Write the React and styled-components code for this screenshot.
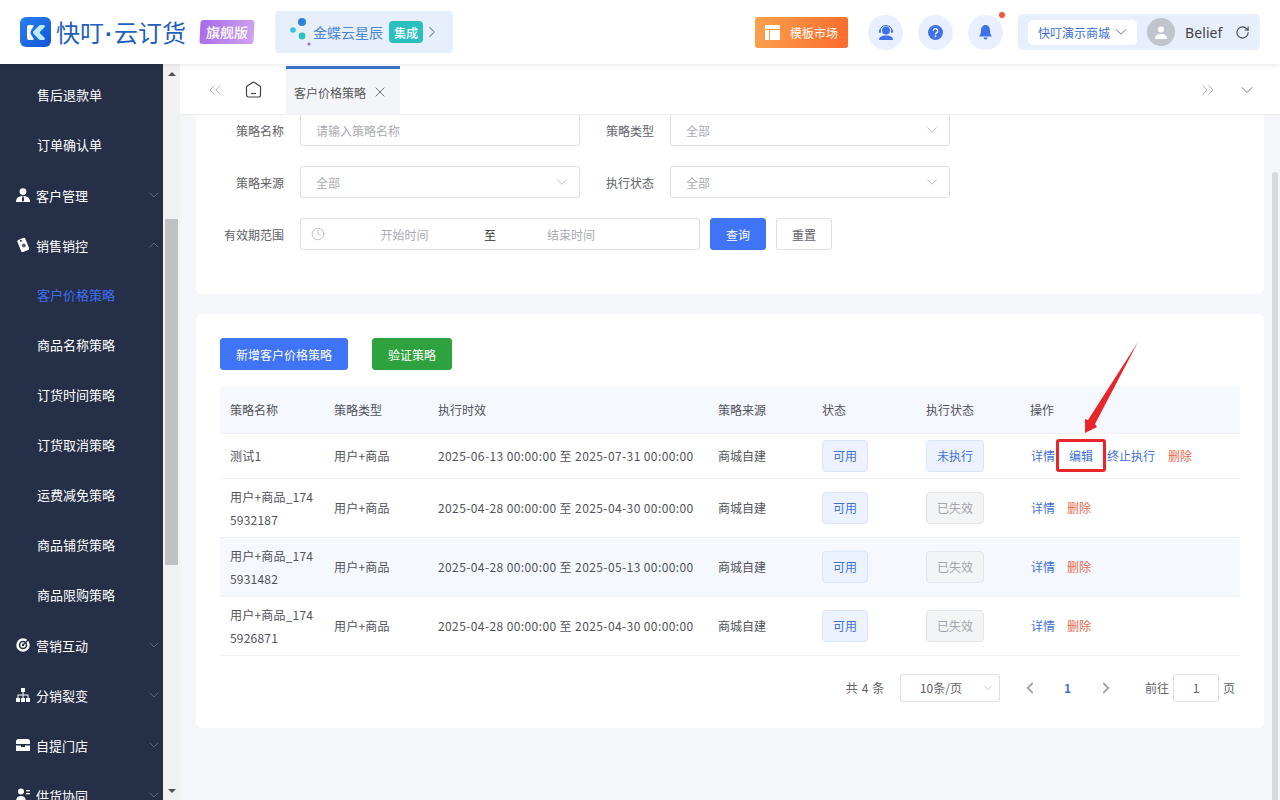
import React from "react";
import styled, { createGlobalStyle } from "styled-components";
import { ChevronDown, ChevronUp, ChevronLeft, ChevronRight, ChevronsLeft, ChevronsRight, X, Clock, RotateCw } from "lucide-react";

const GlobalStyle = createGlobalStyle`
  html, body { margin: 0; height: 100%; overflow: hidden; }
  body {
    font-family: "Noto Sans CJK SC", "Liberation Sans", sans-serif;
    font-size: 12px;
    color: #606266;
  }
  * { box-sizing: border-box; }
`;

const Page = styled.div`
  width: 1280px;
  height: 800px;
  display: flex;
  flex-direction: column;
  background: #f5f6f9;
  overflow: hidden;
`;

/* header */
const Header = styled.header`
  height: 64px;
  flex: none;
  display: flex;
  align-items: center;
  background: #fff;
  box-shadow: 0 1px 4px rgba(0, 0, 0, 0.1);
  padding: 0 20px;
  position: relative;
  z-index: 2;
`;
const LogoMark = styled.div`
  width: 31px;
  height: 30px;
  border-radius: 6px;
  background: linear-gradient(135deg, #2a80f2, #1254d6);
  display: flex;
  align-items: center;
  justify-content: center;
`;
const LogoText = styled.span`
  margin-left: 5px;
  font-size: 24px;
  line-height: 31px;
  color: #1f5fbe;
  white-space: nowrap;
`;
const LogoDot = styled.span`
  font-family: "Liberation Sans", sans-serif;
  font-weight: 700;
  margin: 0 1px;
`;
const Edition = styled.span`
  margin-left: 14px;
  width: 54px;
  height: 24px;
  border-radius: 3px;
  background: linear-gradient(100deg, #a86ae8, #cfa2f2);
  color: #fff;
  font-size: 14px;
  font-weight: 500;
  display: flex;
  align-items: center;
  justify-content: center;
  transform: skewX(-3deg);
`;
const Promo = styled.div`
  margin-left: 21px;
  width: 178px;
  height: 42px;
  border-radius: 4px;
  background: #e8effc;
  display: flex;
  align-items: center;
  padding-left: 15px;
`;
const PromoText = styled.span`
  margin-left: 1px;
  font-size: 14px;
  color: #4a86d6;
  white-space: nowrap;
`;
const PromoTag = styled.span`
  margin-left: 6px;
  width: 34px;
  height: 22px;
  border-radius: 4px;
  background: #2bbfc0;
  color: #fff;
  font-size: 12px;
  font-weight: 500;
  display: flex;
  align-items: center;
  justify-content: center;
`;
const PromoArrow = styled(ChevronRight)`
  color: #8a97ad;
`;
const HeaderRight = styled.div`
  margin-left: auto;
  display: flex;
  align-items: center;
`;
const MarketButton = styled.div`
  width: 93px;
  height: 31px;
  border-radius: 3px;
  background: linear-gradient(100deg, #fca24c, #fb6b2c);
  color: #fff;
  font-size: 12px;
  display: flex;
  align-items: center;
  padding-left: 10px;
  gap: 10px;
`;
const RoundIcon = styled.div`
  width: 35px;
  height: 35px;
  margin-left: ${(p) => p.$gap}px;
  border-radius: 50%;
  background: #e9effc;
  display: flex;
  align-items: center;
  justify-content: center;
  position: relative;
`;
const Dot = styled.span`
  position: absolute;
  top: -3px;
  right: -2px;
  width: 6px;
  height: 6px;
  border-radius: 50%;
  background: #f4573a;
`;
const UserBox = styled.div`
  margin-left: 15px;
  width: 242px;
  height: 36px;
  border-radius: 5px;
  background: #e8effc;
  display: flex;
  align-items: center;
  padding-left: 10px;
`;
const ShopSelect = styled.div`
  width: 109px;
  height: 25px;
  border-radius: 5px;
  background: #fff;
  color: #3d6fd0;
  font-size: 12px;
  display: flex;
  align-items: center;
  padding-left: 10px;
  gap: 2px;
`;
const Avatar = styled.div`
  margin-left: 10px;
  width: 28px;
  height: 28px;
  border-radius: 50%;
  background: #c0c4cc;
  display: flex;
  align-items: center;
  justify-content: center;
`;
const UserName = styled.span`
  margin-left: 10px;
  font-family: "Noto Sans", sans-serif;
  font-size: 14px;
  letter-spacing: 0.1px;
  color: #444;
`;
const RefreshIcon = styled(RotateCw)`
  margin-left: 12px;
  color: #444;
`;

/* sidebar */
const Body = styled.div`
  flex: 1;
  min-height: 0;
  display: flex;
`;
const Sidebar = styled.nav`
  width: 163px;
  flex: none;
  background: #252f48;
  padding-top: 5px;
  overflow: hidden;
`;
const NavRow = styled.div`
  height: 50px;
  flex: none;
  display: flex;
  align-items: center;
  padding-left: ${(p) => (p.$sub ? 37 : 16)}px;
  padding-right: 1px;
  padding-top: ${(p) => (p.$sub ? 0 : 2)}px;
  gap: 6px;
  font-size: 13px;
  color: ${(p) => (p.$active ? "#3e6ff5" : "#fff")};
`;
const NavLabel = styled.span`
  flex: 1;
`;
const NavChevron = styled.span`
  color: #5d6579;
  display: flex;
`;
const SideScroll = styled.div`
  width: 17px;
  flex: none;
  background: #f1f1f1;
  display: flex;
  flex-direction: column;
  align-items: center;
`;
const ScrollArrow = styled.div`
  width: 0;
  height: 0;
  margin-top: ${(p) => (p.$down ? "auto" : "8px")};
  margin-bottom: ${(p) => (p.$down ? "7px" : "0")};
  border-left: 4px solid transparent;
  border-right: 4px solid transparent;
  border-bottom: ${(p) => (p.$down ? "none" : "4px solid #505050")};
  border-top: ${(p) => (p.$down ? "4px solid #505050" : "none")};
`;
const ScrollThumb = styled.div`
  width: 13px;
  height: 346px;
  margin-top: 143px;
  background: #c1c1c1;
`;

/* main */
const Main = styled.main`
  flex: 1;
  min-width: 0;
  display: flex;
  flex-direction: column;
  position: relative;
`;
const TabBar = styled.div`
  height: 51px;
  flex: none;
  background: #fff;
  display: flex;
  align-items: flex-end;
  padding-left: 25px;
  border-bottom: 1px solid #eceef2;
  color: #a0a3a9;
`;
const TabTool = styled.div`
  height: 49px;
  display: flex;
  align-items: center;
  margin-right: ${(p) => p.$gap || 0}px;
  margin-left: ${(p) => p.$left || 0}px;
`;
const Tab = styled.div`
  width: 114px;
  height: 49px;
  margin-left: 24px;
  background: #f4f5f8;
  border-top: 3px solid #3b74c9;
  display: flex;
  align-items: center;
  padding-left: 8px;
  gap: 6px;
  font-size: 12px;
  color: #555;
  margin-bottom: -1px;
`;
const Content = styled.div`
  flex: 1;
  min-height: 0;
  padding: 0 16px;
  position: relative;
  overflow: hidden;
`;
const Card = styled.section`
  background: #fff;
  border-radius: 6px;
  margin-bottom: 20px;
`;
const FilterCard = styled(Card)`
  height: 180px;
  margin-top: -1px;
  padding-right: 20px;
  border-radius: 0 0 6px 6px;
  display: flex;
  flex-direction: column;
  gap: 20px;
`;
const FormRow = styled.div`
  display: flex;
  height: 32px;
  align-items: center;
`;
const FieldLabel = styled.label`
  width: ${(p) => p.$w || 104}px;
  padding-right: 16px;
  text-align: right;
  font-size: 12px;
  color: #606266;
  white-space: nowrap;
`;
const Field = styled.div`
  width: 280px;
  height: 32px;
  background: #fff;
  border: 1px solid #dcdfe6;
  border-radius: 3px;
  display: flex;
  align-items: center;
  padding: 0 8px 0 15px;
  color: #a9acb3;
  font-size: 12px;
`;
const FieldText = styled.span`
  flex: 1;
`;
const DateField = styled(Field)`
  width: 400px;
  padding: 0 10px;
`;
const DateText = styled.span`
  width: ${(p) => p.$w}px;
  text-align: center;
`;
const DateSep = styled.span`
  color: #303133;
`;
const Button = styled.button`
  height: 32px;
  width: ${(p) => p.$w || 56}px;
  margin-left: ${(p) => p.$left || 0}px;
  border-radius: 3px;
  border: 1px solid ${(p) => (p.$bg ? p.$bg : "#dcdfe6")};
  background: ${(p) => p.$bg || "#fff"};
  color: ${(p) => (p.$bg ? "#fff" : "#606266")};
  font: inherit;
  font-size: 12px;
  padding: 0;
`;
const ListCard = styled(Card)`
  height: 414px;
  padding: 24px 24px 0;
`;
const Table = styled.table`
  width: 1020px;
  margin-top: 16px;
  border-collapse: collapse;
  table-layout: fixed;
  font-size: 12px;
  color: #50535a;
`;
const Th = styled.th`
  height: 47px;
  padding: 0 10px;
  background: #f5f8fe;
  font-weight: 400;
  text-align: left;
  color: #50535a;
  border-bottom: 1px solid #eef0f4;
`;
const Tr = styled.tr`
  background: ${(p) => (p.$striped ? "#f5f8fe" : "#fff")};
`;
const Td = styled.td`
  height: ${(p) => p.$h}px;
  padding: 0 10px;
  line-height: 23px;
  border-bottom: 1px solid #eef0f4;
  word-break: break-all;
  letter-spacing: ${(p) => p.$spacing || 0}px;
  white-space: ${(p) => (p.$nowrap ? "nowrap" : "normal")};
`;
const Chip = styled.span`
  display: inline-flex;
  align-items: center;
  justify-content: center;
  height: 32px;
  padding: 0 10px;
  border-radius: 4px;
  border: 1px solid ${(p) => (p.$off ? "#e4e5e8" : "#d9e5fb")};
  background: ${(p) => (p.$off ? "#f3f4f5" : "#ecf2fe")};
  color: ${(p) => (p.$off ? "#a2a5ab" : "#3f72d8")};
  vertical-align: middle;
`;
const Action = styled.a`
  color: ${(p) => (p.$danger ? "#e8694a" : "#3f72d8")};
  margin-left: ${(p) => p.$left || 0}px;
`;
const Pager = styled.div`
  height: 32px;
  margin-top: 16px;
  display: flex;
  align-items: center;
  justify-content: flex-end;
  padding-right: 5px;
`;
const PagerText = styled.span`
  margin-left: ${(p) => p.$left || 0}px;
  letter-spacing: ${(p) => p.$spacing || 0}px;
  color: #606266;
`;
const PageSize = styled(Field)`
  width: 100px;
  height: 28px;
  margin-left: 15px;
  padding: 0 4px 0 19px;
  color: #606266;
`;
const PageArrow = styled.span`
  display: flex;
  margin-left: ${(p) => p.$left}px;
  color: #8f9299;
`;
const PageNum = styled.span`
  margin-left: 25px;
  font-weight: 700;
  color: #3f72d8;
`;
const PageInput = styled(Field)`
  width: 46px;
  height: 28px;
  margin: 0 4px;
  padding: 0;
  justify-content: center;
  color: #606266;
`;
const MainThumb = styled.div`
  position: absolute;
  top: 108px;
  bottom: 0;
  right: 2px;
  width: 6px;
  border-radius: 3px 3px 0 0;
  background: #d9d9db;
`;

/* annotation drawn on top of the screenshot */
const Highlight = styled.div`
  position: absolute;
  left: 876px;
  top: 324px;
  width: 50px;
  height: 33px;
  border: 3px solid #e8262a;
  border-radius: 3px;
`;
const ArrowMark = styled.svg`
  position: absolute;
  left: 900px;
  top: 225px;
`;

const PersonIcon = () => (
  <svg width="14" height="14" viewBox="0 0 14 14" fill="#fff">
    <circle cx="7" cy="3.6" r="3.4" />
    <path d="M0 14c0-4 2.500-6 7-6s7 2 7 6z" />
    <path d="M6.300 8.500h1.400l.5 4-1.200 1.200-1.200-1.200z" fill="#252f48" />
  </svg>
);
const TagIcon = () => (
  <svg width="14" height="16" viewBox="0 0 14 16" fill="#fff">
    <rect x="3" y="1.500" width="8.500" height="13" rx="1.500" transform="rotate(-22 7 8)" />
    <circle cx="4.800" cy="3.800" r="1" fill="#252f48" />
    <circle cx="7.800" cy="8.600" r="2" fill="#5a5f78" />
  </svg>
);
const TargetIcon = () => (
  <svg width="14" height="14" viewBox="0 0 14 14" fill="none" stroke="#fff">
    <circle cx="7" cy="7" r="5.500" strokeWidth="2.500" />
    <circle cx="7" cy="7" r="2" strokeWidth="1.500" />
    <path d="M7 7l5-5" strokeWidth="1.200" stroke="#252f48" />
  </svg>
);
const TreeIcon = () => (
  <svg width="14" height="14" viewBox="0 0 14 14" fill="#fff">
    <rect x="5" y="0" width="4" height="4" />
    <rect x="0" y="10" width="4" height="4" />
    <rect x="5" y="10" width="4" height="4" />
    <rect x="10" y="10" width="4" height="4" />
    <path d="M6.500 4h1v2.500H12.500V10h-1V7.500h-4V10h-1V7.500h-4V10h-1V6.500h5z" />
  </svg>
);
const StoreIcon = () => (
  <svg width="14" height="14" viewBox="0 0 14 14" fill="#fff">
    <path d="M2.500 1h9A2.500 2.500 0 0 1 14 3.500V6H0V3.500A2.500 2.500 0 0 1 2.500 1z" />
    <path d="M0 7.500h5V9h4V7.500h5V13H0z" />
  </svg>
);
const SupplyIcon = () => (
  <svg width="14" height="14" viewBox="0 0 14 14" fill="#fff">
    <circle cx="5" cy="3.500" r="3" />
    <path d="M0 14c0-4 1.500-6 5-6s5 2 5 6z" />
    <rect x="10" y="2" width="4" height="1.300" />
    <rect x="10" y="5" width="4" height="1.300" />
  </svg>
);

const LogoGlyph = () => (
  <svg width="18" height="15" viewBox="0 0 18 15">
    <path d="M2 0h3.500c1 0 1.500.8 1 1.600L4 5.500c-.7 1.200-.7 2.800 0 4l2.500 3.900c.5.800 0 1.600-1 1.600H2c-1.100 0-2-.9-2-2V2C0 .9.900 0 2 0z" fill="#fff" />
    <path d="M13.500 0h3c1.200 0 1.800 1.300 1 2.200L13.300 6.400c-.6.600-.6 1.600 0 2.200l4.200 4.200c.8.900.2 2.200-1 2.200h-3c-.5 0-1-.2-1.400-.6L6.500 8.800c-.7-.7-.7-1.900 0-2.600L12.100.6c.4-.4.900-.6 1.400-.6z" fill="#b9ecff" />
  </svg>
);
const PromoDots = () => (
  <svg width="22" height="28" viewBox="0 0 22 28">
    <circle cx="12" cy="4" r="4" fill="#2f7fe0" />
    <circle cx="3" cy="12" r="2.800" fill="#35c4e0" />
    <circle cx="12" cy="18" r="3.400" fill="#2bbfc0" />
    <circle cx="19" cy="26" r="1.600" fill="#a06ae0" />
  </svg>
);
const LayoutIcon = () => (
  <svg width="15" height="15" viewBox="0 0 15 15" fill="#fff">
    <rect x="0" y="0" width="15" height="4" />
    <rect x="0" y="5" width="4" height="10" />
    <rect x="5" y="5" width="10" height="10" />
  </svg>
);
const AgentIcon = () => (
  <svg width="16" height="15" viewBox="0 0 16 15">
    <circle cx="8" cy="5.500" r="4" fill="#3f72e8" />
    <path d="M2 6a6 5.500 0 0 1 12 0" fill="none" stroke="#3f72e8" strokeWidth="1" />
    <rect x="1" y="4.500" width="2" height="3.500" rx="1" fill="#3f72e8" />
    <rect x="13" y="4.500" width="2" height="3.500" rx="1" fill="#3f72e8" />
    <path d="M1 15c0-3 2.500-4.500 7-4.500s7 1.500 7 4.500z" fill="#3f72e8" />
  </svg>
);
const HelpIcon = () => (
  <svg width="15" height="15" viewBox="0 0 15 15">
    <circle cx="7.500" cy="7.500" r="7.500" fill="#3f72e8" />
    <path d="M5.300 5.800a2.200 2.200 0 1 1 3.400 1.800c-.8.500-1.200.9-1.200 1.800" fill="none" stroke="#fff" strokeWidth="1.300" />
    <circle cx="7.500" cy="11.300" r=".9" fill="#fff" />
  </svg>
);
const BellIcon = () => (
  <svg width="13" height="15" viewBox="0 0 13 15" fill="#3f72e8">
    <path d="M6.500 0C9.500 0 11 2.500 11 5.500c0 2.500.7 4.500 2 6H0c1.300-1.500 2-3.500 2-6C2 2.500 3.500 0 6.500 0z" />
    <path d="M4.500 12.500h4a2 2 0 0 1-4 0z" />
  </svg>
);
const AvatarIcon = () => (
  <svg width="12" height="13" viewBox="0 0 12 13" fill="#fff">
    <circle cx="6" cy="3.500" r="3" />
    <path d="M0 13c0-3.500 2-5 6-5s6 1.500 6 5z" />
  </svg>
);
const HomeIcon = () => (
  <svg width="17" height="17" viewBox="0 0 17 17" fill="none" stroke="#444" strokeWidth="1.200">
    <path d="M8.500 1 15.500 5.500V14a2 2 0 0 1-2 2h-10a2 2 0 0 1-2-2V5.500z" strokeLinejoin="round" />
    <path d="M6 12.500h5" />
  </svg>
);

const navItems = [
  { label: "售后退款单", sub: true },
  { label: "订单确认单", sub: true },
  { label: "客户管理", icon: <PersonIcon /> },
  { label: "销售销控", icon: <TagIcon />, open: true },
  { label: "客户价格策略", sub: true, active: true },
  { label: "商品名称策略", sub: true },
  { label: "订货时间策略", sub: true },
  { label: "订货取消策略", sub: true },
  { label: "运费减免策略", sub: true },
  { label: "商品铺货策略", sub: true },
  { label: "商品限购策略", sub: true },
  { label: "营销互动", icon: <TargetIcon /> },
  { label: "分销裂变", icon: <TreeIcon /> },
  { label: "自提门店", icon: <StoreIcon /> },
  { label: "供货协同", icon: <SupplyIcon /> },
];

const rows = [
  { name: "测试1", time: "2025-06-13 00:00:00 至 2025-07-31 00:00:00", run: "未执行", h: 45, first: true },
  { name: "用户+商品_1745932187", time: "2025-04-28 00:00:00 至 2025-04-30 00:00:00", run: "已失效", off: true, h: 59 },
  { name: "用户+商品_1745931482", time: "2025-04-28 00:00:00 至 2025-05-13 00:00:00", run: "已失效", off: true, h: 59, striped: true },
  { name: "用户+商品_1745926871", time: "2025-04-28 00:00:00 至 2025-04-30 00:00:00", run: "已失效", off: true, h: 59 },
];

const columns = [
  ["策略名称", 104],
  ["策略类型", 104],
  ["执行时效", 280],
  ["策略来源", 104],
  ["状态", 104],
  ["执行状态", 104],
  ["操作", 220],
];

export default function App() {
  return (
    <Page>
      <GlobalStyle />
      <Header>
        <LogoMark>
          <LogoGlyph />
        </LogoMark>
        <LogoText>
          快叮<LogoDot>·</LogoDot>云订货
        </LogoText>
        <Edition>旗舰版</Edition>
        <Promo>
          <PromoDots />
          <PromoText>金蝶云星辰</PromoText>
          <PromoTag>集成</PromoTag>
          <PromoArrow size={18} strokeWidth={1.500} />
        </Promo>
        <HeaderRight>
          <MarketButton>
            <LayoutIcon />
            模板市场
          </MarketButton>
          <RoundIcon $gap={20}>
            <AgentIcon />
          </RoundIcon>
          <RoundIcon $gap={15}>
            <HelpIcon />
          </RoundIcon>
          <RoundIcon $gap={15}>
            <BellIcon />
            <Dot />
          </RoundIcon>
          <UserBox>
            <ShopSelect>
              快叮演示商城
              <ChevronDown size={18} strokeWidth={1.200} color="#666" />
            </ShopSelect>
            <Avatar>
              <AvatarIcon />
            </Avatar>
            <UserName>Belief</UserName>
            <RefreshIcon size={15} strokeWidth={1.700} />
          </UserBox>
        </HeaderRight>
      </Header>
      <Body>
        <Sidebar>
          {navItems.map((item) => (
            <NavRow key={item.label} $sub={item.sub} $active={item.active}>
              {item.icon}
              <NavLabel>{item.label}</NavLabel>
              {!item.sub && (
                <NavChevron>
                  {item.open ? <ChevronUp size={16} strokeWidth={1.500} /> : <ChevronDown size={16} strokeWidth={1.500} />}
                </NavChevron>
              )}
            </NavRow>
          ))}
        </Sidebar>
        <SideScroll>
          <ScrollArrow />
          <ScrollThumb />
          <ScrollArrow $down />
        </SideScroll>
        <Main>
          <TabBar>
            <TabTool $gap={20}>
              <ChevronsLeft size={20} strokeWidth={1} />
            </TabTool>
            <TabTool>
              <HomeIcon />
            </TabTool>
            <Tab>
              客户价格策略
              <X size={16} strokeWidth={1.400} color="#666" />
            </Tab>
            <TabTool $left={798}>
              <ChevronsRight size={20} strokeWidth={1} />
            </TabTool>
            <TabTool $left={19}>
              <ChevronDown size={20} strokeWidth={1} color="#666" />
            </TabTool>
          </TabBar>
          <Content>
            <FilterCard>
              <FormRow>
                <FieldLabel>策略名称</FieldLabel>
                <Field>
                  <FieldText>请输入策略名称</FieldText>
                </Field>
                <FieldLabel $w={90}>策略类型</FieldLabel>
                <Field>
                  <FieldText>全部</FieldText>
                  <ChevronDown size={18} strokeWidth={1.100} />
                </Field>
              </FormRow>
              <FormRow>
                <FieldLabel>策略来源</FieldLabel>
                <Field>
                  <FieldText>全部</FieldText>
                  <ChevronDown size={18} strokeWidth={1.100} />
                </Field>
                <FieldLabel $w={90}>执行状态</FieldLabel>
                <Field>
                  <FieldText>全部</FieldText>
                  <ChevronDown size={18} strokeWidth={1.100} />
                </Field>
              </FormRow>
              <FormRow>
                <FieldLabel>有效期范围</FieldLabel>
                <DateField>
                  <Clock size={14} strokeWidth={1.200} />
                  <DateText $w={159}>开始时间</DateText>
                  <DateSep>至</DateSep>
                  <DateText $w={150}>结束时间</DateText>
                </DateField>
                <Button $bg="#3f74f6" $left={10}>查询</Button>
                <Button $left={10}>重置</Button>
              </FormRow>
            </FilterCard>
            <ListCard>
              <div>
                <Button $bg="#3f74f6" $w={128}>新增客户价格策略</Button>
                <Button $bg="#2ea23e" $w={80} $left={24}>验证策略</Button>
              </div>
              <Table>
                <colgroup>
                  {columns.map(([title, w]) => (
                    <col key={title} style={{ width: w }} />
                  ))}
                </colgroup>
                <thead>
                  <tr>
                    {columns.map(([title]) => (
                      <Th key={title}>{title}</Th>
                    ))}
                  </tr>
                </thead>
                <tbody>
                  {rows.map((row) => (
                    <Tr key={row.name} $striped={row.striped}>
                      <Td $h={row.h} $spacing={0.2}>{row.name}</Td>
                      <Td $h={row.h} $spacing={0.2}>用户+商品</Td>
                      <Td $h={row.h} $nowrap $spacing={0.4}>{row.time}</Td>
                      <Td $h={row.h}>商城自建</Td>
                      <Td $h={row.h}>
                        <Chip>可用</Chip>
                      </Td>
                      <Td $h={row.h}>
                        <Chip $off={row.off}>{row.run}</Chip>
                      </Td>
                      <Td $h={row.h} $nowrap>
                        <Action $left={1}>详情</Action>
                        {row.first ? (
                          <>
                            <Action $left={14}>编辑</Action>
                            <Action $left={14}>终止执行</Action>
                            <Action $danger $left={13}>删除</Action>
                          </>
                        ) : (
                          <Action $danger $left={12}>删除</Action>
                        )}
                      </Td>
                    </Tr>
                  ))}
                </tbody>
              </Table>
              <Pager>
                <PagerText $spacing={0.6}>共 4 条</PagerText>
                <PageSize>
                  <FieldText>10条/页</FieldText>
                  <ChevronDown size={14} strokeWidth={1.200} color="#b5b8bf" />
                </PageSize>
                <PageArrow $left={21}>
                  <ChevronLeft size={18} strokeWidth={2.200} />
                </PageArrow>
                <PageNum>1</PageNum>
                <PageArrow $left={26}>
                  <ChevronRight size={18} strokeWidth={2.200} />
                </PageArrow>
                <PagerText $left={30}>前往</PagerText>
                <PageInput>1</PageInput>
                <PagerText>页</PagerText>
              </Pager>
            </ListCard>
            <Highlight />
            <ArrowMark width="60" height="96" viewBox="0 0 60 96">
              <path d="M58 2 15 84l2 3-12 6V79l3 1z" fill="#e8262a" />
            </ArrowMark>
          </Content>
          <MainThumb />
        </Main>
      </Body>
    </Page>
  );
}
